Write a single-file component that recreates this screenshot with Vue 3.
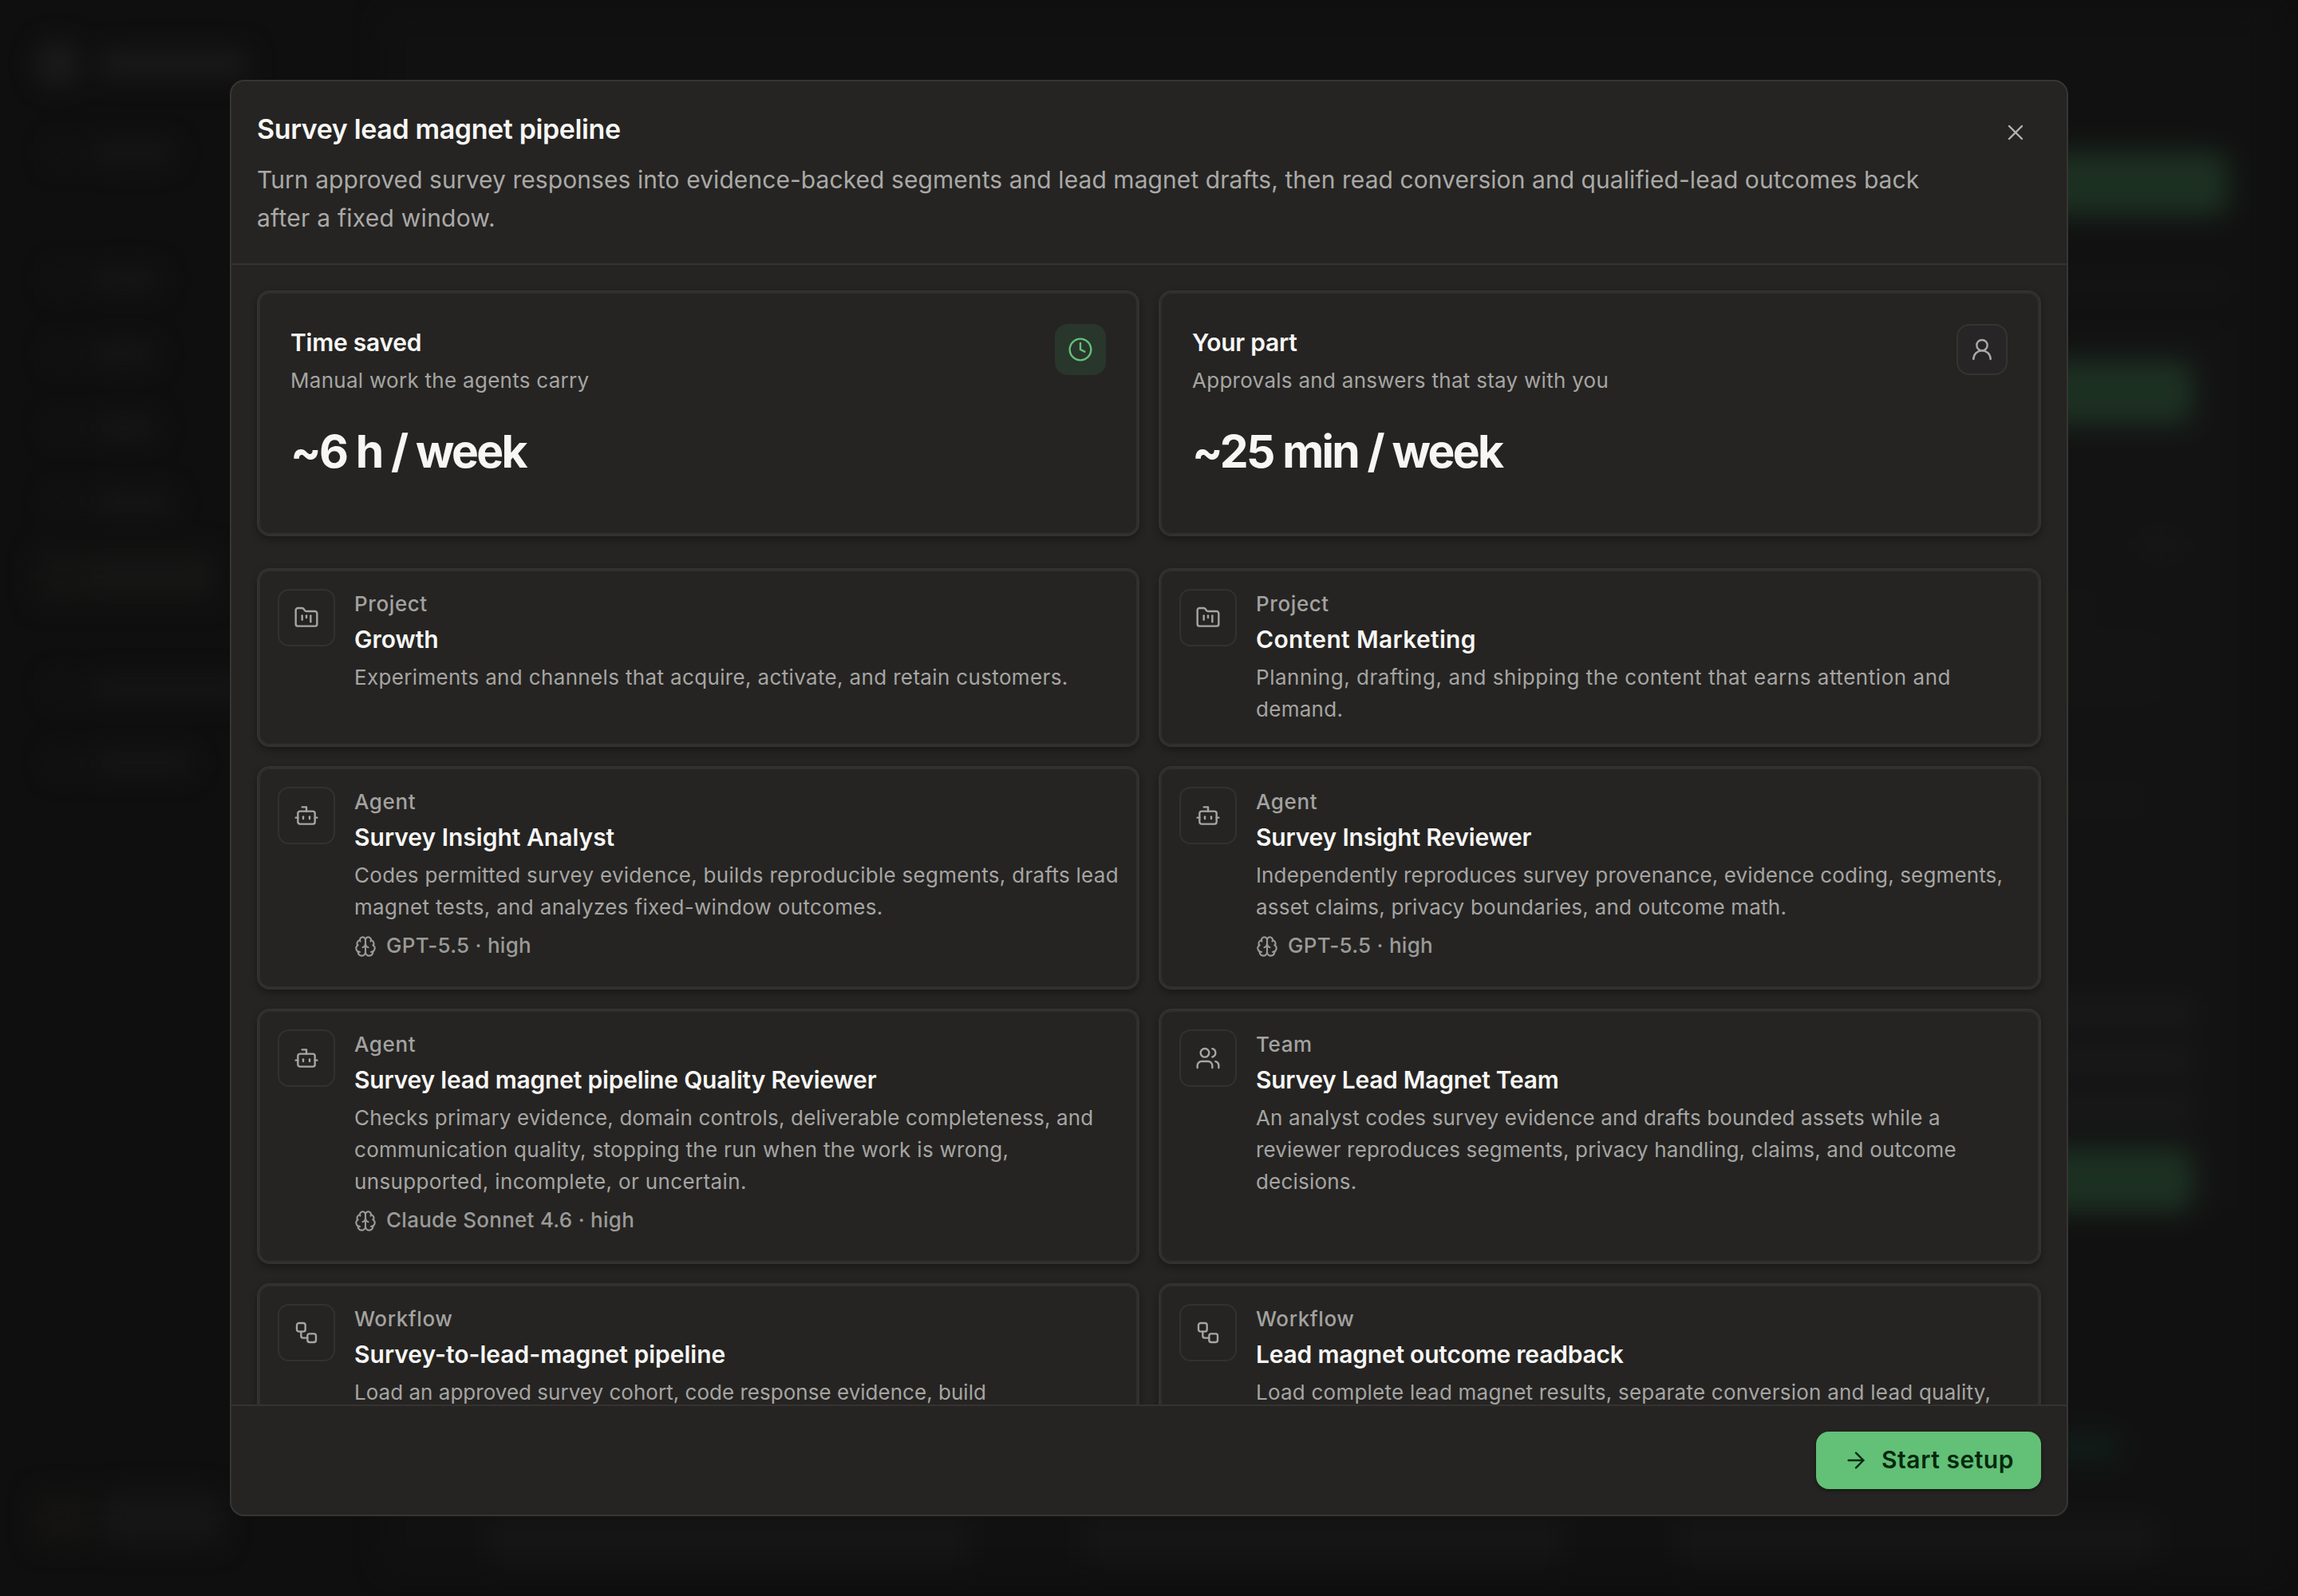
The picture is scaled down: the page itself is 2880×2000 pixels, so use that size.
<script setup>
const navGroups = [
  { gap: 50, items: [{ w: 100 }] },
  { gap: 94, items: [{ w: 84 }, { w: 78 }, { w: 80 }, { w: 100 }, { w: 150, active: true }] },
  { gap: 77, items: [{ w: 190 }, { w: 124 }] },
]

const stats = [
  { title: 'Time saved', sub: 'Manual work the agents carry', value: '~6 h / week', icon: 'clock', accent: true },
  { title: 'Your part', sub: 'Approvals and answers that stay with you', value: '~25 min / week', icon: 'user', accent: false },
]

// each text carries its own tracking in px
const items = [
  {
    kind: 'Project', icon: 'folder', title: 'Growth', track: 0,
    lines: [['Experiments and channels that acquire, activate, and retain customers.', 0.35]],
  },
  {
    kind: 'Project', icon: 'folder', title: 'Content Marketing', track: 0.33,
    lines: [['Planning, drafting, and shipping the content that earns attention and', 0.54], ['demand.', 0.28]],
  },
  {
    kind: 'Agent', icon: 'bot', title: 'Survey Insight Analyst', track: 0, model: 'GPT-5.5 · high',
    lines: [['Codes permitted survey evidence, builds reproducible segments, drafts lead', 0.28], ['magnet tests, and analyzes fixed-window outcomes.', 0.33]],
  },
  {
    kind: 'Agent', icon: 'bot', title: 'Survey Insight Reviewer', track: -0.18, model: 'GPT-5.5 · high',
    lines: [['Independently reproduces survey provenance, evidence coding, segments,', 0.14], ['asset claims, privacy boundaries, and outcome math.', 0.22]],
  },
  {
    kind: 'Agent', icon: 'bot', title: 'Survey lead magnet pipeline Quality Reviewer', track: -0.2, model: 'Claude Sonnet 4.6 · high',
    lines: [['Checks primary evidence, domain controls, deliverable completeness, and', 0.16], ['communication quality, stopping the run when the work is wrong,', 0.3], ['unsupported, incomplete, or uncertain.', 0.36]],
  },
  {
    kind: 'Team', icon: 'users', title: 'Survey Lead Magnet Team', track: -0.28,
    lines: [['An analyst codes survey evidence and drafts bounded assets while a', 0.14], ['reviewer reproduces segments, privacy handling, claims, and outcome', 0.16], ['decisions.', 0.2]],
  },
  {
    kind: 'Workflow', icon: 'workflow', title: 'Survey-to-lead-magnet pipeline', track: 0,
    lines: [['Load an approved survey cohort, code response evidence, build', 0.02]],
  },
  {
    kind: 'Workflow', icon: 'workflow', title: 'Lead magnet outcome readback', track: -0.22,
    lines: [['Load complete lead magnet results, separate conversion and lead quality,', 0.23]],
  },
]

const icons = {
  clock: '<circle cx="12" cy="12" r="10"/><path d="M12 6v6l4 2"/>',
  user: '<circle cx="12" cy="8" r="5"/><path d="M20 21a8 8 0 0 0-16 0"/>',
  folder: '<path d="M4 20h16a2 2 0 0 0 2-2V8a2 2 0 0 0-2-2h-7.93a2 2 0 0 1-1.66-.9l-.82-1.2A2 2 0 0 0 7.93 3H4a2 2 0 0 0-2 2v13c0 1.1.9 2 2 2Z"/><path d="M8 10v4"/><path d="M12 10v2"/><path d="M16 10v6"/>',
  bot: '<path d="M12 8V4H8"/><rect width="16" height="12" x="4" y="8" rx="2"/><path d="M2 14h2"/><path d="M20 14h2"/><path d="M15 13v2"/><path d="M9 13v2"/>',
  users: '<path d="M16 21v-2a4 4 0 0 0-4-4H6a4 4 0 0 0-4 4v2"/><circle cx="9" cy="7" r="4"/><path d="M22 21v-2a4 4 0 0 0-3-3.87"/><path d="M16 3.13a4 4 0 0 1 0 7.75"/>',
  workflow: '<rect width="8" height="8" x="3" y="3" rx="2"/><path d="M7 11v4a2 2 0 0 0 2 2h4"/><rect width="8" height="8" x="13" y="13" rx="2"/>',
  brain: '<path d="M12 18V5"/><path d="M15 13a4.17 4.17 0 0 1-3-4 4.17 4.17 0 0 1-3 4"/><path d="M17.598 6.5A3 3 0 1 0 12 5a3 3 0 1 0-5.598 1.5"/><path d="M17.997 5.125a4 4 0 0 1 2.526 5.77"/><path d="M18 18a4 4 0 0 0 2-7.464"/><path d="M19.967 17.483A4 4 0 1 1 12 18a4 4 0 1 1-7.967-.517"/><path d="M6 18a4 4 0 0 1-2-7.464"/><path d="M6.003 5.125a4 4 0 0 0-2.526 5.77"/>',
}
</script>

<template>
  <div class="screen">
    <div class="backdrop" aria-hidden="true">
      <aside class="side">
        <div class="brand"><i class="logo"></i><i class="name"></i></div>
        <div v-for="(g, gi) in navGroups" :key="gi" class="nav-group" :style="{ marginTop: g.gap + 'px' }">
          <div v-for="(n, ni) in g.items" :key="ni" class="nav-item" :class="{ active: n.active }">
            <i class="dot"></i><i class="bar" :style="{ width: n.w + 'px' }"></i>
          </div>
        </div>
        <div class="account"><i class="avatar"></i><i class="who"></i></div>
      </aside>
      <main class="main">
        <i class="cta"></i>
        <i class="caption"></i>
        <div class="panel">
          <i class="cta"></i>
          <i class="chip"></i>
          <i class="line short"></i>
          <i class="line"></i>
          <i class="line far"></i>
          <i class="line mid"></i>
          <i class="line wide first"></i>
          <i class="line wide"></i>
          <i class="line wide"></i>
          <i class="cta last"></i>
        </div>
        <div class="lower">
          <i class="teal"></i>
          <div class="cols"><i></i><i></i><i></i></div>
        </div>
      </main>
    </div>

    <section class="dialog" role="dialog">
      <header class="head">
        <div class="head-text">
          <h1>Survey lead magnet pipeline</h1>
          <p>Turn approved survey responses into evidence-backed segments and lead magnet drafts, then read conversion and qualified-lead outcomes back<br /><span class="rest">after a fixed window.</span></p>
        </div>
        <button class="close" aria-label="Close">
          <svg class="icon" viewBox="0 0 24 24"><path d="M18 6 6 18" /><path d="m6 6 12 12" /></svg>
        </button>
      </header>

      <div class="body">
        <div class="grid">
          <article v-for="s in stats" :key="s.title" class="card stat">
            <div class="stat-top">
              <div>
                <h2>{{ s.title }}</h2>
                <p class="sub">{{ s.sub }}</p>
              </div>
              <span class="badge" :class="{ accent: s.accent }">
                <svg class="icon" viewBox="0 0 24 24" v-html="icons[s.icon]"></svg>
              </span>
            </div>
            <div class="value">{{ s.value }}</div>
          </article>
        </div>

        <div class="grid list">
          <article v-for="(it, i) in items" :key="i" class="card item">
            <span class="tile"><svg class="icon" viewBox="0 0 24 24" v-html="icons[it.icon]"></svg></span>
            <div class="info">
              <div class="kind">{{ it.kind }}</div>
              <h3 :style="{ letterSpacing: it.track + 'px' }">{{ it.title }}</h3>
              <p class="desc">
                <span v-for="[text, track] in it.lines" :key="text" :style="{ letterSpacing: track + 'px' }">{{ text }}</span>
              </p>
              <div v-if="it.model" class="model">
                <svg class="icon" viewBox="0 0 24 24" v-html="icons.brain"></svg><span>{{ it.model }}</span>
              </div>
            </div>
          </article>
        </div>
      </div>

      <footer class="foot">
        <button class="start">
          <svg class="icon" viewBox="0 0 24 24"><path d="M5 12h14" /><path d="m12 5 7 7-7 7" /></svg>
          <span>Start setup</span>
        </button>
      </footer>
    </section>
  </div>
</template>

<style>
body {
  background: #0f0f0f;
}
</style>

<style scoped>
* {
  box-sizing: border-box;
}
h1, h2, h3, p {
  margin: 0;
}
.screen {
  position: relative;
  display: flex;
  align-items: center;
  justify-content: center;
  width: 2880px;
  height: 2000px;
  overflow: hidden;
  background: #0f0f0f;
  font-family: Inter, "Liberation Sans", sans-serif;
  color: #f7f6f4;
}
.icon {
  display: block;
  flex: none;
  width: 32px;
  height: 32px;
  fill: none;
  stroke: currentColor;
  stroke-width: 1.8;
  stroke-linecap: round;
  stroke-linejoin: round;
}

/* dimmed page behind the dialog */
.backdrop {
  position: absolute;
  inset: 0;
  display: flex;
  filter: blur(16px);
}
.backdrop i {
  display: block;
  flex: none;
}
.side {
  display: flex;
  flex-direction: column;
  width: 480px;
  padding: 50px 46px 64px;
}
.brand {
  display: flex;
  align-items: center;
  gap: 28px;
  height: 60px;
}
.logo {
  width: 52px;
  height: 56px;
  border-radius: 50%;
  background: #1c1c1c;
}
.name {
  width: 184px;
  height: 34px;
  background: #1a1a1a;
}
.nav-group {
  display: flex;
  flex-direction: column;
  gap: 29px;
}
.nav-item {
  display: flex;
  align-items: center;
  gap: 24px;
  width: 226px;
  height: 64px;
  padding-left: 18px;
}
.nav-item.active {
  background: #141413;
}
.dot {
  width: 28px;
  height: 26px;
  background: #141414;
}
.bar {
  height: 26px;
  background: #171717;
}
.account {
  display: flex;
  align-items: center;
  gap: 18px;
  margin-top: auto;
}
.avatar {
  width: 64px;
  height: 64px;
  background: #151412;
}
.who {
  width: 150px;
  height: 66px;
  background: #161616;
}
.main {
  display: flex;
  flex: 1;
  flex-direction: column;
  align-items: flex-end;
  margin: 16px 32px 32px 0;
  padding: 174px 56px 0 0;
  background: #111111;
}
.cta {
  width: 520px;
  height: 80px;
  border-radius: 16px;
  background: #1c3022;
}
.caption {
  width: 460px;
  height: 24px;
  margin-top: 76px;
  background: #141414;
}
.panel {
  display: flex;
  flex-direction: column;
  align-items: flex-end;
  width: 1900px;
  height: 1100px;
  margin-top: 44px;
  padding: 38px 44px 0 0;
  background: #131313;
}
.chip {
  width: 48px;
  height: 24px;
  margin: 138px 16px 0 0;
  background: #171717;
}
.line {
  width: 300px;
  height: 20px;
  margin: 34px 40px 0 0;
  background: #161616;
}
.line.short {
  margin: 56px 120px 0 0;
}
.line.far {
  margin-top: 26px;
}
.line.mid {
  margin: 124px 60px 0 0;
}
.line.wide {
  width: 200px;
  height: 28px;
  margin: 32px 0 0;
  background: #1a1a1a;
}
.line.wide.first {
  margin-top: 241px;
}
.cta.last {
  margin-top: 36px;
}
.lower {
  display: flex;
  flex-direction: column;
  align-items: flex-end;
  width: 2240px;
  margin-top: 282px;
}
.teal {
  width: 180px;
  height: 34px;
  margin-right: 136px;
  background: #111d1a;
}
.cols {
  display: flex;
  gap: 144px;
  margin: 70px 90px 0 0;
}
.cols i {
  width: 600px;
  height: 64px;
  background: #151515;
}

/* dialog */
.dialog {
  position: relative;
  display: flex;
  flex-direction: column;
  width: 2304px;
  height: 1800px;
  overflow: hidden;
  border: 2px solid #363533;
  border-radius: 18px;
  background: #252422;
}
.head {
  display: flex;
  flex: none;
  justify-content: space-between;
  height: 230px;
  padding: 40px 32px 0;
  border-bottom: 2px solid #343331;
}
.head h1 {
  font-size: 34px;
  font-weight: 640;
  line-height: 40px;
  letter-spacing: -0.38px;
}
.head p {
  margin-top: 19px;
  font-size: 30px;
  font-weight: 420;
  line-height: 48px;
  letter-spacing: 0.068px;
  white-space: nowrap;
  color: #aaa9a7;
}
.head .rest {
  letter-spacing: 0.25px;
}
.close {
  display: flex;
  align-items: center;
  justify-content: center;
  width: 64px;
  height: 64px;
  margin-top: -8px;
  padding: 0;
  border: 0;
  background: none;
  color: #b4b3b1;
}
.body {
  flex: 1;
  min-height: 0;
  overflow: hidden;
  padding: 32px 32px 0;
}
.grid {
  display: grid;
  grid-template-columns: repeat(2, minmax(0, 1fr));
  gap: 24px;
}
.list {
  margin-top: 40px;
}
.card {
  border: 2px solid #333230;
  border-radius: 16px;
  background: #252422;
  box-shadow: inset 0 0 0 2px #302f2d, 0 4px 10px rgba(0, 0, 0, 0.32);
}
.stat {
  height: 308px;
  padding: 40px;
}
.stat-top {
  display: flex;
  justify-content: space-between;
}
.stat h2,
.item h3 {
  font-size: 30px;
  font-weight: 630;
  line-height: 46px;
  letter-spacing: -0.25px;
  white-space: nowrap;
}
.sub,
.desc {
  margin-top: 5px;
  font-size: 26px;
  font-weight: 410;
  line-height: 40px;
  letter-spacing: 0.28px;
  white-space: nowrap;
  color: #a6a5a3;
}
.desc span {
  display: block;
}
.badge {
  display: flex;
  align-items: center;
  justify-content: center;
  width: 64px;
  height: 64px;
  border: 2px solid #353433;
  border-radius: 16px;
  background: #272526;
  color: #aaa9a7;
}
.badge.accent {
  border-color: #29362b;
  background: #29362b;
  color: #64c07a;
}
.value {
  margin-top: 37px;
  font-size: 57px;
  font-weight: 650;
  line-height: 64px;
  letter-spacing: -2.7px;
  word-spacing: 0.7px;
}
.item {
  display: flex;
  gap: 24px;
  min-height: 224px;
  padding: 24px 24px 25px;
}
.tile {
  display: flex;
  flex: none;
  align-items: center;
  justify-content: center;
  width: 72px;
  height: 72px;
  border: 2px solid #32312f;
  border-radius: 14px;
  color: #a6a5a3;
}
.kind {
  padding-top: 1px;
  font-size: 26px;
  font-weight: 500;
  line-height: 36px;
  letter-spacing: 0.6px;
  color: #a3a2a0;
}
.item h3 {
  margin-top: 3px;
}
.model {
  display: flex;
  align-items: center;
  gap: 12px;
  height: 40px;
  margin: 7px 0 9px;
  font-size: 26px;
  font-weight: 500;
  letter-spacing: 0.27px;
  color: #9b9a98;
}
.model .icon {
  width: 28px;
  height: 28px;
  margin-top: 3px;
}
.foot {
  display: flex;
  flex: none;
  align-items: center;
  justify-content: flex-end;
  height: 138px;
  padding: 0 32px;
  border-top: 2px solid #343331;
}
.start {
  display: flex;
  align-items: center;
  gap: 16px;
  width: 282px;
  height: 72px;
  padding: 0 0 0 34px;
  border: 0;
  border-radius: 16px;
  background: #63c077;
  box-shadow: 0 2px 4px rgba(0, 20, 5, 0.6);
  color: #04290d;
  font: 620 30px/40px Inter, sans-serif;
  letter-spacing: 0.55px;
  white-space: nowrap;
}
.start span {
  padding-bottom: 2px;
}
</style>
